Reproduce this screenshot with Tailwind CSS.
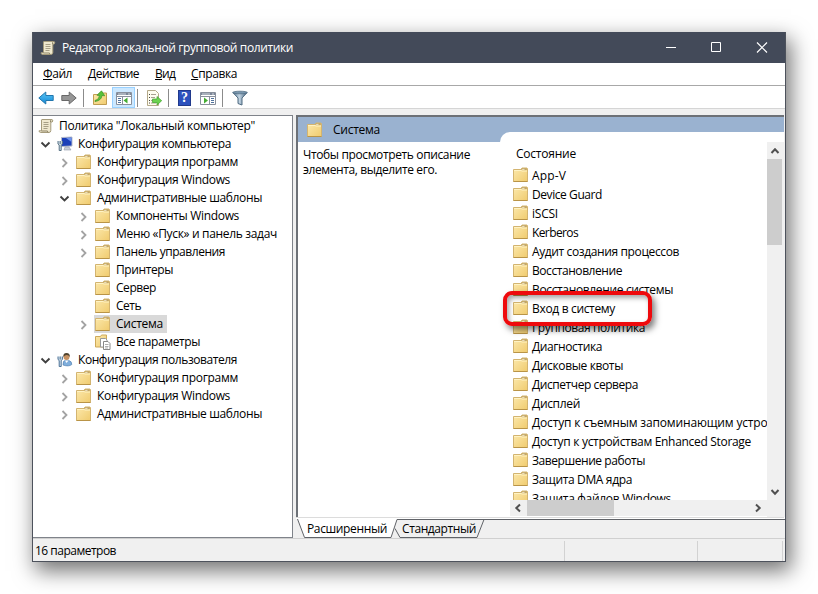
<!DOCTYPE html>
<html lang="ru">
<head>
  <meta charset="UTF-8">
  <title>Редактор локальной групповой политики</title>
  <script src="https://cdn.jsdelivr.net/npm/@tailwindcss/browser@4"></script>
</head>
<body class="w-[818px] h-[594px] overflow-hidden bg-white pt-8 pl-8 text-[12px] text-black whitespace-nowrap font-['Open_Sans','Noto_Sans',sans-serif]">

  <!-- Icons -->
  <svg class="absolute size-0">
    <defs>
      <linearGradient id="gold" x1="0" y1="0" x2="1" y2="1">
        <stop offset="0" stop-color="#fce9ad"/><stop offset="1" stop-color="#f0cb6e"/>
      </linearGradient>
      <linearGradient id="blue" x1="0" y1="0" x2="0" y2="1">
        <stop offset="0" stop-color="#5cc8f5"/><stop offset="1" stop-color="#1187d6"/>
      </linearGradient>
      <linearGradient id="steel" x1="0" y1="0" x2="1" y2="0">
        <stop offset="0" stop-color="#51718d"/><stop offset=".45" stop-color="#c4d6e4"/><stop offset="1" stop-color="#41607c"/>
      </linearGradient>
    </defs>
    <symbol id="folder" viewBox="0 0 16 16">
      <path d="M.5 2.500h7.500l1-1.500h5l.5 1v12.500h-14z" fill="url(#gold)" stroke="#d3b470"/>
      <path d="M9 1.500h4.500v1.500h-5z" fill="#fffdf2" stroke="#b59242" stroke-width=".6"/>
      <path d="M11.500 2.300h1.500" stroke="#a8873c" stroke-width=".8"/>
      <path d="M1 3.500h7l1 .500h5" fill="none" stroke="#fff3c4"/>
      <path d="M.5 14.500h14" stroke="#b99447"/>
    </symbol>
    <symbol id="scroll" viewBox="0 0 16 16">
      <path d="M4 1.500h9.500q1.500 0 1.300 1.500t-2 1v8.500q0 2-2 2H2.500q-1.500-.2-1.500-1.700h2.500V3q-.5-1.500.5-1.500z" fill="#efe8ce" stroke="#a69c7c"/>
      <path d="M12.500 4q-.3-2 1-2.300M3.500 13h6q0 1.500 1 1.500" fill="none" stroke="#8e8467"/>
      <path d="M5.500 4.500h5M5.500 6.500h5M5.500 8.500h5M5.500 10.500h4" stroke="#a79f86"/>
    </symbol>
    <symbol id="computer" viewBox="0 0 16 16">
      <path d="M4.500 1.500l10.500-.5v9l-10.500 .5z" fill="#1b3fb8" stroke="#b6bccb"/>
      <path d="M9 2l5.500-.3V6z" fill="#6d93ee"/>
      <path d="M8 11h4l2 3H7z" fill="#c9ced8" stroke="#959bab" stroke-width=".6"/>
      <path d="M1 5v3l1.200 1v5.500h2V9l1.200-1V5M3.200 5v3" fill="#cfdde6" stroke="#587386"/>
    </symbol>
    <symbol id="user" viewBox="0 0 16 16">
      <path d="M6 13q-.5-4.500 3-5l2.500.3q3.500 1 3.300 4.200-3 2.500-8.800.5z" fill="#7faedc" stroke="#5684b3" stroke-width=".7"/>
      <circle cx="9.500" cy="5" r="3" fill="#c79263"/>
      <path d="M6.400 5q-.5-4 3.100-4t3.300 4q-1-2-3-2t-3.400 2z" fill="#50432f"/>
      <path d="M8 8.500l1.500 2.500 2-2.500z" fill="#fff"/>
      <path d="M1 4.500v3l1.200 1v6h2v-6l1.200-1v-3M3.200 4.500v3" fill="#cfdde6" stroke="#4c7398"/>
    </symbol>
    <symbol id="allsettings" viewBox="0 0 16 16">
      <path d="M.5 2.500h5l1-1.500h5v12H.5z" fill="url(#gold)" stroke="#cda95a"/>
      <path d="M5.500 4.500h5l1.500 1.500v7H5.500z" fill="#fff" stroke="#999"/>
      <path d="M8.500 7.500h4.500l2 2v6H8.500z" fill="#fff" stroke="#888"/>
      <path d="M10 10.500h3.500M10 12.500h3.500M10 14h3" stroke="#999" stroke-width=".8"/>
    </symbol>
    <symbol id="right" viewBox="0 0 16 16"><path d="M5.500 5l4 4-4 4" fill="none" stroke="#a3a3a3" stroke-width="1.800"/></symbol>
    <symbol id="down" viewBox="0 0 16 16"><path d="M3.500 6.500l4 4 4-4" fill="none" stroke="#404040" stroke-width="1.900"/></symbol>
    <symbol id="arrow" viewBox="0 0 16 16"><path d="M.8 8l7-6v3.500h7.400v5H7.800V14z"/></symbol>
    <symbol id="chevron" viewBox="0 0 10 10"><path d="M1.500 7L5 3.300 8.500 7" fill="none" stroke="#505050" stroke-width="2"/></symbol>
  </svg>

  <div class="relative flex flex-col w-[754px] h-[530px] bg-[#f0f0f0] border border-[#4d525c] border-t-0 shadow-[4px_8px_20px_1px_rgba(0,0,0,0.55)]">

    <!-- Title bar -->
    <div class="flex items-center h-[31px] shrink-0 bg-[#434a59] text-white pl-[7px]">
      <svg class="size-4 mr-[6px]"><use href="#scroll"/></svg>
      <span data-w="231">Редактор локальной групповой политики</span>
      <div class="flex ml-auto">
        <svg class="w-[46px] h-[31px]" fill="none" stroke="#fff"><path d="M19 15.500h10"/></svg>
        <svg class="w-[46px] h-[31px]" fill="none" stroke="#fff"><path d="M18.500 10.500h9v9h-9z"/></svg>
        <svg class="w-[46px] h-[31px]" fill="none" stroke="#fff" stroke-width="1.200"><path d="M18 10.500l10 10M28 10.500l-10 10"/></svg>
      </div>
    </div>

    <!-- Menu -->
    <div class="flex items-center h-[23px] shrink-0 bg-white border-b border-[#a8a8a8] pl-[10px] gap-4">
      <span data-w="29"><u>Ф</u>айл</span>
      <span data-w="51"><u>Д</u>ействие</span>
      <span data-w="20"><u>В</u>ид</span>
      <span data-w="46"><u>С</u>правка</span>
    </div>

    <!-- Toolbar -->
    <div class="flex items-center h-[23px] shrink-0 bg-white border-b border-[#d5d5d5] pt-px pl-[5px]">
      <svg class="size-4" fill="url(#blue)" stroke="#2276ad"><use href="#arrow"/></svg>
      <svg class="size-4 ml-[7px] -scale-x-100" fill="#969696" stroke="#686868"><use href="#arrow"/></svg>
      <i class="w-px h-[18px] bg-[#8b8b8b] ml-[6px]"></i>
      <svg class="size-4 ml-[8px]" viewBox="0 0 16 16">
        <path d="M1.500 4.500h5l1-1.500h7v11.500h-13z" fill="url(#gold)" stroke="#c09d52"/>
        <path d="M3 10.500q4-.500 4.500-5L5 5.300 9.500.8l3.200 5-2.700-.3q-.500 5-7 6z" fill="#58c13a" stroke="#389427" stroke-width=".7"/>
      </svg>
      <div class="flex items-center justify-center w-[23px] h-[21px] ml-[4px] bg-[#cce8ff] border border-[#99d1ff]">
        <svg class="size-4 shrink-0" viewBox="0 0 16 16">
          <path d="M.5 2.500h15v12H.5z" fill="#fff" stroke="#89909c"/><path d="M1 3h14v2H1z" fill="#7c8799"/>
          <path d="M2 4h8M12 4h2" stroke="#fff" stroke-width=".7"/><path d="M1 6.500h14M6.500 7v7" stroke="#89909c"/>
          <path d="M2 8.500h3M2 10.500h3M2 12.500h3" stroke="#52739d"/><path d="M11.500 7.500v6l-4-3z" fill="#43ad32"/>
        </svg>
      </div>
      <i class="w-px h-[18px] bg-[#8b8b8b] ml-[2px]"></i>
      <svg class="size-4 ml-[8px]" viewBox="0 0 16 16">
        <path d="M1.500.500h8l3 3v12h-11z" fill="#fffdf0" stroke="#b3a888"/>
        <path d="M3 4.500h1M3 7.500h1M3 10.500h1M3 13h1" stroke="#444"/>
        <path d="M5 4.500h5M5 7.500h4M5 10.500h3M5 13h5" stroke="#aaa291"/>
        <path d="M6.500 9h4.500V6.500l4.700 4.200L11 15v-2.500H6.500z" fill="#6cd250" stroke="#42a32f" stroke-width=".7"/>
      </svg>
      <i class="w-px h-[18px] bg-[#8b8b8b] ml-[6px]"></i>
      <div class="flex items-center justify-center w-[13px] h-4 ml-[9px] bg-[#2c51bd] border border-[#20398c] text-white text-[14px] leading-none font-bold font-['Liberation_Serif',serif]">?</div>
      <svg class="size-4 ml-[9px]" viewBox="0 0 16 16">
        <path d="M.5 2.500h15v12H.5z" fill="#fff" stroke="#89909c"/><path d="M1 3h14v2H1z" fill="#7c8799"/>
        <path d="M2 4h8M12 4h2" stroke="#fff" stroke-width=".7"/><path d="M1 6.500h14M9.500 7v7" stroke="#89909c"/>
        <path d="M11 8.500h3M11 10.500h3M11 12.500h3" stroke="#52739d"/><path d="M4 7.500v6l4-3z" fill="#43ad32"/>
      </svg>
      <i class="w-px h-[18px] bg-[#8b8b8b] ml-[6px]"></i>
      <svg class="size-4 ml-[9px]" viewBox="0 0 16 16">
        <path d="M.8 2.500L6 8v5.500l4 1.500V8l5.200-5.500z" fill="url(#steel)" stroke="#4f6a80"/>
        <ellipse cx="8" cy="2.500" rx="7.200" ry="1.300" fill="#7896ae" stroke="#4f6a80" stroke-width=".7"/>
      </svg>
    </div>

    <div class="flex h-[429px] shrink-0 pt-[6px]">
      <!-- Tree -->
      <div id="tree" class="w-[260px] h-[423px] shrink-0 bg-white border border-l-0 border-[#7f838a] pt-px"></div>

      <!-- Details -->
      <div class="flex flex-col w-[489px] ml-[3px]">
        <div class="flex h-[402px] shrink-0 bg-[#9ab2d0] border-t-2 border-l-2 border-[#6d7177] mr-px">
          <div class="flex flex-col w-[202px]">
            <div class="flex items-center h-[25px] pl-[9px]">
              <svg class="size-4 mr-[10px]"><use href="#folder"/></svg>
              <span data-w="47">Система</span>
            </div>
            <div class="grow bg-white pt-[5px] pl-[5px] leading-[15px]">
              <div><span data-w="167">Чтобы просмотреть описание</span></div>
              <div><span data-w="134">элемента, выделите его.</span></div>
            </div>
          </div>
          <div class="flex w-[284px] mt-[15px] bg-white rounded-tl-[10px] overflow-hidden">
            <div class="flex flex-col w-[267px]">
              <div class="h-[368px] overflow-hidden">
                <div class="h-[34px] pt-[13px] pl-[16px] leading-[18px]"><span data-w="60">Состояние</span></div>
                <div id="list" class="pl-[13px]"></div>
              </div>
              <div class="flex items-center h-4 ml-[10px] bg-[#f0f0f0]">
                <svg class="size-[10px] mx-[3px] -rotate-90"><use href="#chevron"/></svg>
                <div class="w-[87px] h-full bg-[#cdcdcd] ml-[1px]"></div>
                <svg class="size-[10px] ml-auto mr-[4px] rotate-90"><use href="#chevron"/></svg>
              </div>
            </div>
            <div class="flex flex-col items-center w-[17px] mt-[10px] pr-[2px] bg-[#f0f0f0]">
              <svg class="size-[10px] mt-[4px] mb-[3px] shrink-0"><use href="#chevron"/></svg>
              <div class="w-[15px] h-[86px] bg-[#cdcdcd] shrink-0"></div>
              <svg class="size-[10px] mt-auto mb-[20px] shrink-0 rotate-180"><use href="#chevron"/></svg>
            </div>
          </div>
        </div>
        <!-- Tabs -->
        <div class="relative h-[22px]">
          <svg class="absolute inset-0 w-[489px] h-[22px]">
            <path d="M0 0h489v2H0z" fill="#fff"/><path d="M0 .5h488" stroke="#dcdcdc"/>
            <path d="M101 2.500h388" stroke="#606368"/>
            <path d="M101 3h87l-7 17.500h-77l-6-10z" fill="#f0f0f0"/><path d="M188 2.500l-7 18h-77l-5-9" fill="none" stroke="#606368"/>
            <path d="M1 1.500l8 19h86l6-18.500z" fill="#fff"/><path d="M1.500 2l7 18.500h86.500l6-18" fill="none" stroke="#606368"/>
          </svg>
          <div class="relative flex items-center h-[23px] pl-[11px] gap-[15px]">
            <span data-w="80">Расширенный</span>
            <span data-w="74">Стандартный</span>
          </div>
        </div>
      </div>
    </div>

    <!-- Status bar -->
    <div class="flex grow items-center border-t border-[#d0d0d0] pt-[2px] pl-[2px]">
      <span data-w="81">16 параметров</span>
      <i class="w-px h-[20px] bg-[#d2d2d2] ml-[448px]"></i>
      <i class="w-px h-[20px] bg-[#d2d2d2] ml-[132px]"></i>
      <i class="w-px h-[20px] bg-[#d2d2d2] ml-[84px]"></i>
    </div>

    <!-- Highlight -->
    <div class="absolute left-[470px] top-[259px] w-[149px] h-[35px] rounded-[9px] border-4 border-[#ee0a0d] shadow-[3px_4px_6px_rgba(0,0,0,0.5),inset_2px_3px_5px_rgba(0,0,0,0.35)]"></div>
  </div>

  <script>
    // level, expander, icon, label, label width
    const tree = [
      [-1, "", "scroll", 'Политика "Локальный компьютер"', 196],
      [0, "down", "computer", "Конфигурация компьютера", 153],
      [1, "right", "folder", "Конфигурация программ", 141],
      [1, "right", "folder", "Конфигурация Windows", 133],
      [1, "down", "folder", "Административные шаблоны", 165],
      [2, "right", "folder", "Компоненты Windows", 123],
      [2, "right", "folder", "Меню «Пуск» и панель задач", 161],
      [2, "right", "folder", "Панель управления", 109],
      [2, "", "folder", "Принтеры", 57],
      [2, "", "folder", "Сервер", 40],
      [2, "", "folder", "Сеть", 25],
      [2, "right", "folder", "Система", 47],
      [2, "", "allsettings", "Все параметры", 84],
      [0, "down", "user", "Конфигурация пользователя", 159],
      [1, "right", "folder", "Конфигурация программ", 141],
      [1, "right", "folder", "Конфигурация Windows", 133],
      [1, "right", "folder", "Административные шаблоны", 165],
    ];

    const items = [
      ["App-V", 34], ["Device Guard", 70], ["iSCSI", 26], ["Kerberos", 46],
      ["Аудит создания процессов", 147], ["Восстановление", 90],
      ["Восстановление системы", 141], ["Вход в систему", 83],
      ["Групповая политика", 113], ["Диагностика", 70], ["Дисковые квоты", 91],
      ["Диспетчер сервера", 106], ["Дисплей", 48],
      ["Доступ к съемным запоминающим устройствам", 276],
      ["Доступ к устройствам Enhanced Storage", 219], ["Завершение работы", 113],
      ["Защита DMA ядра", 100], ["Защита файлов Windows", 139],
    ];

    document.getElementById("tree").innerHTML = tree.map(([level, exp, icon, label, w]) => `
      <div class="flex items-center h-[18px]" style="padding-left:${5 + level * 19}px">
        <svg class="size-4 shrink-0">${exp ? `<use href="#${exp}"/>` : ""}</svg>
        <div class="flex items-center h-[18px] ml-[2px] pl-px pr-[4px] ${label === "Система" ? "bg-[#d9d9d9]" : ""}">
          <svg class="size-4 shrink-0 mr-[5px]"><use href="#${icon}"/></svg>
          <span data-w="${w}">${label}</span>
        </div>
      </div>`).join("");

    // the root row has no expander column
    const root = document.getElementById("tree").firstElementChild;
    root.style.paddingLeft = "2px";
    root.firstElementChild.remove();

    document.getElementById("list").innerHTML = items.map(([label, w]) => `
      <div class="flex items-center h-[19px]">
        <svg class="size-4 shrink-0 mr-[3px] mb-[2px]"><use href="#folder"/></svg>
        <span data-w="${w}">${label}</span>
      </div>`).join("");

    const ctx = document.createElement("canvas").getContext("2d");
    ctx.font = "12px 'Open Sans', 'Noto Sans', sans-serif";
    document.querySelectorAll("[data-w]").forEach((el) => {
      const gap = (el.dataset.w - ctx.measureText(el.textContent).width) / el.textContent.length;
      el.style.letterSpacing = gap.toFixed(3) + "px";
    });
  </script>
</body>
</html>
